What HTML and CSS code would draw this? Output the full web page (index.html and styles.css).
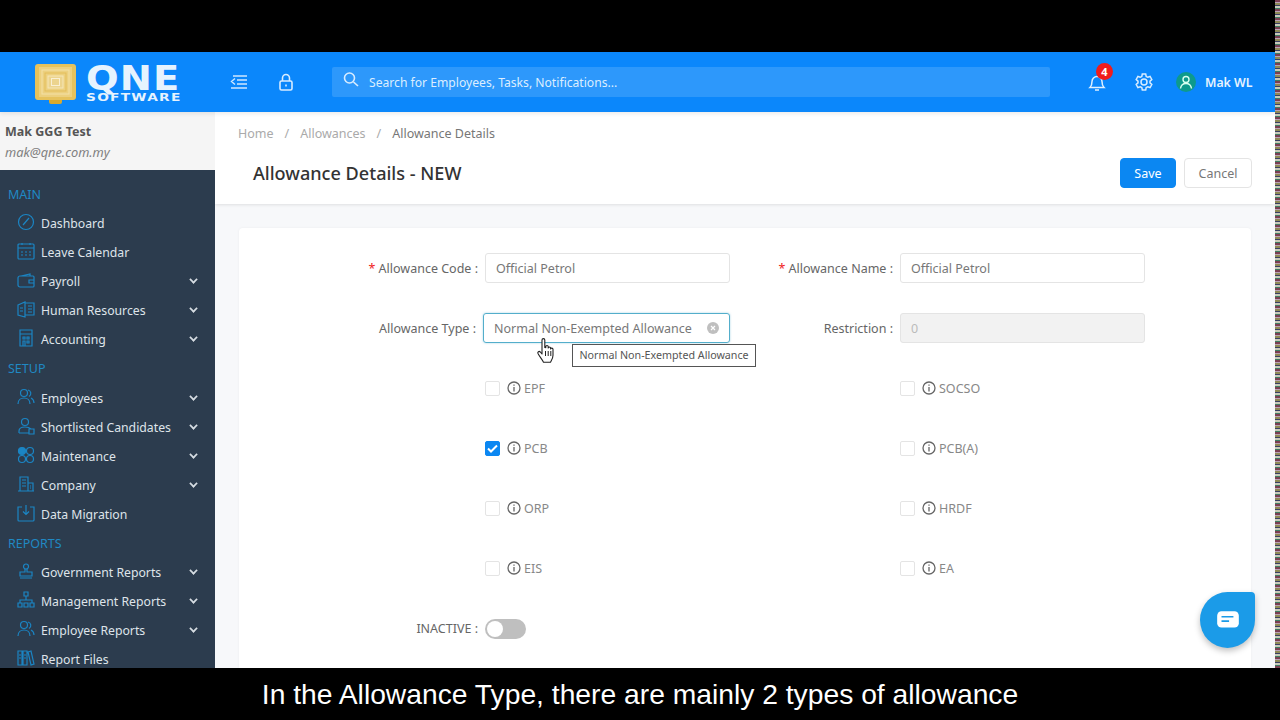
FILE: index.html
```html
<!DOCTYPE html>
<html lang="en">
<head>
<meta charset="utf-8">
<title>Allowance Details</title>
<link rel="stylesheet" href="styles.css">
</head>
<body>
<div class="screen">
<div class="left-col">
<div class="letterbox-top"></div>
  <div class="app">
    <header class="topbar">
      <div class="logo">
        <svg class="logo-mark" width="41" height="40" viewBox="0 0 41 40" fill="none">
          <path d="M14 35h13v3a2 2 0 0 1-2 2H16a2 2 0 0 1-2-2z" fill="#d9a92e"/>
          <rect x="0" y="0" width="41" height="36" rx="3" fill="#e6c25c"/>
          <rect x="4" y="3" width="33" height="30" fill="#ecd07f"/>
          <rect x="7" y="6" width="27" height="24" stroke="#f3e0a6"/>
          <rect x="10" y="9" width="21" height="18" stroke="#e3bd5a"/>
          <rect x="13" y="12" width="15" height="12" fill="#ecd48e" stroke="#f5e6b8"/>
          <rect x="16.500" y="14.500" width="8" height="7" stroke="#f9efd2"/>
        </svg>
        <div class="logo-text">
          <span class="logo-qne">QNE</span>
          <span class="logo-soft">SOFTWARE</span>
        </div>
      </div>
      <svg class="tool-icon menu-icon" width="18" height="18" viewBox="0 0 18 18" fill="none" stroke="#cfe7ff" stroke-width="1.400"><path d="M3 3h14M7 7h10M7 11h10M1 15h16M5 5.500 1.500 8.500l3.500 3"/></svg>
      <svg class="tool-icon lock-icon" width="18" height="18" viewBox="0 0 18 18" fill="none" stroke="#d8ecff" stroke-width="1.600"><rect x="3" y="8" width="12" height="9" rx="1.500"/><path d="M5.500 8V5a3.500 3.500 0 0 1 7 0v3M9 11.500v2"/></svg>
      <div class="search">
        <svg width="18" height="18" viewBox="0 0 18 18" fill="none" stroke="#d8ecff" stroke-width="1.600"><circle cx="7.500" cy="7" r="5"/><path d="m11.500 11 4.500 4"/></svg>
        <span>Search for Employees, Tasks, Notifications...</span>
      </div>
      <div class="top-right">
        <div class="bell">
          <svg width="18" height="20" viewBox="0 0 18 20" fill="none" stroke="#e0f0ff" stroke-width="1.500"><path d="M2 15.500c1.500-1.500 2-3 2-6a5 5 0 0 1 10 0c0 3 .5 4.500 2 6zM7 18h4"/></svg>
          <span class="badge">4</span>
        </div>
        <svg class="gear" width="20" height="20" viewBox="0 0 20 20" fill="none" stroke="#d8ecff" stroke-width="1.500"><path d="M8.300 2h3.400l.5 2.400 1.600.9 2.300-.8 1.700 3-1.800 1.600v1.800l1.800 1.600-1.700 3-2.300-.8-1.600.9-.5 2.400H8.300l-.5-2.400-1.600-.9-2.300.8-1.700-3 1.800-1.600V9.100L2.200 7.500l1.700-3 2.300.8 1.600-.9z"/><circle cx="10" cy="10" r="3"/></svg>
        <span class="avatar"><svg width="14" height="14" viewBox="0 0 14 14" fill="none" stroke="#d8fff0" stroke-width="1.400"><circle cx="7" cy="4.500" r="3"/><path d="M1.500 13.500c.5-3.500 2.500-5 5.500-5s5 1.500 5.500 5"/></svg></span>
        <span class="user-name">Mak WL</span>
      </div>
    </header>

    <div class="body-row">
      <aside class="sidebar">
        <div class="profile">
          <div class="profile-name">Mak GGG Test</div>
          <div class="profile-mail">mak@qne.com.my</div>
        </div>
        <nav class="nav">
          <div class="nav-head">MAIN</div>
          <a class="nav-item"><svg class="ni" viewBox="0 0 18 18"><circle cx="9" cy="9" r="7.500"/><path d="m6 12 6-7"/></svg><span>Dashboard</span></a>
          <a class="nav-item"><svg class="ni" viewBox="0 0 18 18"><rect x="1" y="2" width="16" height="15" rx="1"/><path d="M1 6h16M5 1v2M13 1v2M4 10h2M8 10h2M12 10h2M4 13h2M8 13h2M12 13h2"/></svg><span>Leave Calendar</span></a>
          <a class="nav-item"><svg class="ni" viewBox="0 0 18 18"><path d="M3 5h13a1 1 0 0 1 1 1v9a1 1 0 0 1-1 1H3a2 2 0 0 1-2-2V7a2 2 0 0 1 2-2zM4 5l9-2v2M12 9h5v3h-5z"/></svg><span>Payroll</span><i class="chev"></i></a>
          <a class="nav-item"><svg class="ni" viewBox="0 0 18 18"><path d="M1 5l7-3v15l-7-2zM8 3h9v12H8M11 6h4M11 9h4M11 12h4M3 8h3M3 11h3"/></svg><span>Human Resources</span><i class="chev"></i></a>
          <a class="nav-item"><svg class="ni" viewBox="0 0 18 18"><path d="M3 1h12v16H3zM3 5h12M6 8h2v2H6zM10 8h2v2h-2zM6 12h2v5H6zM10 12h2v2h-2z"/></svg><span>Accounting</span><i class="chev"></i></a>
          <div class="nav-head">SETUP</div>
          <a class="nav-item"><svg class="ni" viewBox="0 0 18 18"><circle cx="7" cy="5" r="3.500"/><path d="M1 16c0-4 3-6 6-6s6 2 6 6M11 2a3.500 3.500 0 0 1 1 6.500M14 10c2 1 3 3 3 5"/></svg><span>Employees</span><i class="chev"></i></a>
          <a class="nav-item"><svg class="ni" viewBox="0 0 18 18"><circle cx="8" cy="5" r="3.500"/><path d="M2 16v-2c0-2.500 2.500-4 6-4s5 1 6 2M2 16h10M12 12h5v5h-5z"/></svg><span>Shortlisted Candidates</span><i class="chev"></i></a>
          <a class="nav-item"><svg class="ni" viewBox="0 0 18 18"><circle cx="5" cy="5" r="3.500" fill="#1b85c4"/><circle cx="13" cy="5" r="3.500"/><circle cx="5" cy="13" r="3.500"/><circle cx="13" cy="13" r="3.500"/></svg><span>Maintenance</span><i class="chev"></i></a>
          <a class="nav-item"><svg class="ni" viewBox="0 0 18 18"><path d="M3 2h8v14H3zM11 8h5v8h-5zM5 5h4M5 8h4M5 11h4M13 11h1M13 13h1M1 16h16"/></svg><span>Company</span><i class="chev"></i></a>
          <a class="nav-item"><svg class="ni" viewBox="0 0 18 18"><path d="M5 3H1v13a1 1 0 0 0 1 1h14a1 1 0 0 0 1-1V3h-4M9 1v9M6 7.500 9 10.500l3-3"/></svg><span>Data Migration</span></a>
          <div class="nav-head">REPORTS</div>
          <a class="nav-item"><svg class="ni" viewBox="0 0 18 18"><circle cx="9" cy="4.500" r="2.500"/><path d="M8 7v3H3v4h12v-4h-5V7M3 16h12"/></svg><span>Government Reports</span><i class="chev"></i></a>
          <a class="nav-item"><svg class="ni" viewBox="0 0 18 18"><path d="M7 1h4v4H7zM9 5v4M3 12V9h12v3M1 12h4v4H1zM7 12h4v4H7zM13 12h4v4h-4z"/></svg><span>Management Reports</span><i class="chev"></i></a>
          <a class="nav-item"><svg class="ni" viewBox="0 0 18 18"><circle cx="7" cy="5" r="3.500"/><path d="M1 16c0-4 3-6 6-6s6 2 6 6M11 2a3.500 3.500 0 0 1 1 6.500M14 10c2 1 3 3 3 5"/></svg><span>Employee Reports</span><i class="chev"></i></a>
          <a class="nav-item"><svg class="ni" viewBox="0 0 18 18"><path d="M1 2h4v14H1zM6 2h4v14H6zM11 3l3-1 3 13-3 1zM2 6h2M7 6h2M2 9h2M7 9h2"/></svg><span>Report Files</span></a>
        </nav>
      </aside>

      <main class="main">
        <section class="page-head">
          <div class="crumbs">
            <span>Home</span><span class="sep">/</span><span>Allowances</span><span class="sep">/</span><span class="current">Allowance Details</span>
          </div>
          <div class="title-row">
            <h1>Allowance Details - NEW</h1>
            <div class="actions">
              <button class="btn btn-primary">Save</button>
              <button class="btn">Cancel</button>
            </div>
          </div>
        </section>
        <section class="card">
          <div class="form">
            <label class="lbl"><b>*</b> Allowance Code :</label>
            <div class="input">Official Petrol</div>
            <label class="lbl"><b>*</b> Allowance Name :</label>
            <div class="input">Official Petrol</div>

            <label class="lbl lbl-type">Allowance Type :</label>
            <div class="input input-focus"><span>Normal Non-Exempted Allowance</span><svg width="12" height="12" viewBox="0 0 12 12"><circle cx="6" cy="6" r="6" fill="#bfbfbf"/><path d="m4 4 4 4M8 4l-4 4" stroke="#fff" stroke-width="1.200"/></svg></div>
            <label class="lbl">Restriction :</label>
            <div class="input input-off">0</div>

            <span></span>
            <div class="check"><i class="box"></i><svg class="info" viewBox="0 0 14 14"><circle cx="7" cy="7" r="6"/><path d="M7 6v4.500M7 3.500v1.200"/></svg>EPF</div>
            <span></span>
            <div class="check"><i class="box"></i><svg class="info" viewBox="0 0 14 14"><circle cx="7" cy="7" r="6"/><path d="M7 6v4.500M7 3.500v1.200"/></svg>SOCSO</div>

            <span></span>
            <div class="check"><i class="box box-on"><svg width="11" height="9" viewBox="0 0 11 9" fill="none" stroke="#fff" stroke-width="2"><path d="m1 4.500 3 3 6-6"/></svg></i><svg class="info" viewBox="0 0 14 14"><circle cx="7" cy="7" r="6"/><path d="M7 6v4.500M7 3.500v1.200"/></svg>PCB</div>
            <span></span>
            <div class="check"><i class="box"></i><svg class="info" viewBox="0 0 14 14"><circle cx="7" cy="7" r="6"/><path d="M7 6v4.500M7 3.500v1.200"/></svg>PCB(A)</div>

            <span></span>
            <div class="check"><i class="box"></i><svg class="info" viewBox="0 0 14 14"><circle cx="7" cy="7" r="6"/><path d="M7 6v4.500M7 3.500v1.200"/></svg>ORP</div>
            <span></span>
            <div class="check"><i class="box"></i><svg class="info" viewBox="0 0 14 14"><circle cx="7" cy="7" r="6"/><path d="M7 6v4.500M7 3.500v1.200"/></svg>HRDF</div>

            <span></span>
            <div class="check"><i class="box"></i><svg class="info" viewBox="0 0 14 14"><circle cx="7" cy="7" r="6"/><path d="M7 6v4.500M7 3.500v1.200"/></svg>EIS</div>
            <span></span>
            <div class="check"><i class="box"></i><svg class="info" viewBox="0 0 14 14"><circle cx="7" cy="7" r="6"/><path d="M7 6v4.500M7 3.500v1.200"/></svg>EA</div>

            <label class="lbl">INACTIVE :</label>
            <div class="switch-cell"><span class="switch"><i></i></span></div>
          </div>
        </section>
      </main>
    </div>

    <div class="tooltip">Normal Non-Exempted Allowance</div>
    <svg class="hand" width="20" height="26" viewBox="0 0 20 26"><path d="M6 2a1.400 1.400 0 0 1 2.800 0v7.500l1 .1V8.500c0-1.400 2.400-1.400 2.400 0v1.500c0-1.300 2.400-1.300 2.400 0v1c0-1.200 2.400-1.200 2.400.2v6c0 3-1.500 5-2.500 7H7.500C6 21 3.500 18.500 2 15.500c-.7-1.500 1-2.800 2.300-1.500L6 16z" fill="#fff" stroke="#222" stroke-width="1.100" stroke-linejoin="round"/><path d="M9.500 13v5M12.200 13v5M14.800 13v5" stroke="#222" fill="none"/></svg>
    <div class="chat"><svg width="26" height="22" viewBox="0 0 24 20"><path d="M6 2h12a4 4 0 0 1 4 4v7a4 4 0 0 1-4 4H6a4 4 0 0 1-4-4V6a4 4 0 0 1 4-4z" fill="#fff"/><path d="M6 7h11M6 11h7" stroke="#1b9be8" stroke-width="1.600"/></svg></div>
  </div>
</div>
<div class="noise"></div>
</div>
<footer class="caption">In the Allowance Type, there are mainly 2 types of allowance</footer>
</body>
</html>
```
FILE: styles.css
```css
* { box-sizing: border-box; }
html, body { margin: 0; height: 100%; }
body {
  width: 1280px;
  height: 720px;
  overflow: hidden;
  background: #000;
  display: flex;
  flex-direction: column;
  font-family: "Noto Sans", "Open Sans", sans-serif;
  font-size: 13px;
  color: #666;
}
.screen { height: 668px; flex: none; display: flex; }
.left-col { width: 1275px; flex: none; display: flex; flex-direction: column; }
.letterbox-top { height: 52px; flex: none; background: #000; }
.app { position: relative; width: 1275px; height: 616px; flex: none; overflow: hidden; display: flex; flex-direction: column; background: #f7f8fa; }
.noise {
  width: 5px;
  background:
    repeating-linear-gradient(0deg, #7a3f52 0 2px, #3f7f63 2px 3px, #c9c9b8 3px 5px, #3a3f66 5px 6px, #8e8a55 6px 8px, #b9a0b5 8px 9px),
    #888;
}
.caption {
  flex: 1;
  display: flex;
  align-items: center;
  justify-content: center;
  color: #fff;
  font-family: "Liberation Sans", Arial, sans-serif;
  font-size: 28.250px;
}

.topbar {
  height: 60px;
  flex: none;
  display: flex;
  align-items: center;
  background: #0b87fb;
  position: relative;
  z-index: 3;
  box-shadow: 0 2px 4px rgba(0, 0, 0, .08);
}
.logo { width: 230px; flex: none; display: flex; align-items: center; padding-left: 35px; gap: 10px; }
.logo-mark { flex: none; margin-top: 3px; }
.logo-text { display: flex; flex-direction: column; color: #e6f3fe; font-family: "DejaVu Sans", sans-serif; font-weight: 700; line-height: 1; margin-top: 3px; }
.logo-qne { display: block; font-size: 34px; height: 28px; line-height: 27px; letter-spacing: 1px; transform: scaleX(1.130); transform-origin: left; }
.logo-soft { display: block; font-size: 11px; height: 10px; line-height: 10px; letter-spacing: 1px; transform: scaleX(1.250); transform-origin: left; }
.tool-icon { flex: none; }
.lock-icon { margin-left: 29px; }
.search {
  margin-left: 37px;
  width: 718px;
  height: 30px;
  flex: none;
  display: flex;
  align-items: center;
  gap: 9px;
  padding: 0 0 0 10px;
  background: #2d98fb;
  border-radius: 2px;
  color: #dceeff;
  font-size: 12.150px;
}
.search span { margin-top: 1px; }
.search svg { margin-top: -5px; }
.top-right { display: flex; align-items: center; margin-left: 38px; }
.bell { position: relative; width: 18px; height: 20px; }
.badge {
  position: absolute;
  left: 8px;
  top: -9px;
  width: 17px;
  height: 17px;
  border-radius: 50%;
  background: #f01c1c;
  color: #fff;
  font-size: 11px;
  font-weight: 700;
  line-height: 17px;
  text-align: center;
}
.gear { margin-left: 28px; flex: none; }
.avatar { width: 20px; height: 20px; margin-left: 22px; border-radius: 50%; background: #0d9a8c; display: flex; align-items: center; justify-content: center; }
.user-name { margin-left: 9px; color: #e6f3fe; font-weight: 600; font-size: 12.300px; white-space: nowrap; }

.body-row { flex: 1; min-height: 0; display: flex; }
.sidebar { width: 215px; flex: none; display: flex; flex-direction: column; overflow: hidden; background: #2c3c4e; }
.profile { height: 58px; flex: none; background: #f5f5f5; padding: 11px 5px 0; }
.profile-name { font-weight: 700; font-size: 12.500px; color: #555; line-height: 18px; }
.profile-mail { font-style: italic; font-size: 12.800px; color: #808080; line-height: 18px; margin-top: 2px; }
.nav { padding-top: 10px; }
.nav-head { height: 29.080px; line-height: 29px; padding-left: 8px; color: #2089c4; font-size: 12.500px; }
.nav-item { height: 29.080px; display: flex; align-items: center; padding-left: 17px; color: #dfe4ea; font-size: 12.250px; position: relative; white-space: nowrap; }
.ni { width: 18px; height: 18px; margin-right: 6px; flex: none; fill: none; stroke: #1b85c4; stroke-width: 1.200; margin-top: -3px; }
.chev { position: absolute; left: 190px; top: 9px; width: 7px; height: 7px; border-right: 2px solid #d6dce2; border-bottom: 2px solid #d6dce2; transform: rotate(45deg) scale(.85); }

.main { flex: 1; min-width: 0; overflow: hidden; display: flex; flex-direction: column; }
.page-head { height: 92px; flex: none; background: #fff; box-shadow: 0 1px 3px rgba(0, 0, 0, .1); padding: 12px 23px 0 23px; }
.crumbs { display: flex; align-items: center; gap: 11px; height: 19px; color: #aaa; font-size: 12.500px; }
.crumbs .current { color: #777; }
.title-row { display: flex; align-items: center; justify-content: space-between; margin-top: 14px; padding-left: 15px; height: 32px; }
h1 { margin: 0; font-size: 18.100px; font-weight: 500; color: #333; }
.actions { display: flex; gap: 8px; }
.btn { height: 30px; width: 68px; padding: 0; border: 1px solid #e4e4e4; border-radius: 4px; background: #fff; color: #777; font: inherit; font-size: 12.500px; }
.btn-primary { width: 56px; background: #0b87f2; border-color: #0b87f2; color: #fff; }

.card { margin: 24px 24px 0; background: #fff; flex: 1; border-radius: 4px 4px 0 0; box-shadow: 0 0 3px rgba(0, 0, 0, .05); padding-top: 10px; }
.form { display: grid; grid-template-columns: 246px 245px 170px 245px; grid-auto-rows: 60px; align-items: center; }
.lbl { text-align: right; padding-right: 7px; color: #666; font-size: 12.500px; white-space: nowrap; }
.lbl-type { padding-right: 9px; }
.lbl b { color: #f01c1c; font-weight: 400; }
.input { height: 30px; border: 1px solid #e4e4e4; border-radius: 3px; padding: 0 10px; display: flex; align-items: center; color: #777; font-size: 12.500px; }
.input-focus { justify-content: space-between; border-color: #53aecb; box-shadow: 0 0 2px rgba(60, 160, 200, .5); padding: 0 10px; margin-left: -2px; }
.input-off { background: #f2f2f2; color: #bbb; }
.check { display: flex; align-items: center; color: #888; font-size: 12.500px; }
.box { width: 15px; height: 15px; border: 1px solid #e4e4e4; border-radius: 2px; margin-right: 7px; display: flex; align-items: center; justify-content: center; flex: none; }
.box-on { background: #0b87f2; border-color: #0b87f2; }
.info { width: 14px; height: 14px; margin-right: 3px; fill: none; stroke: #666; stroke-width: 1.300; flex: none; }
.switch-cell { display: flex; padding-top: 2px; }
.switch { width: 41px; height: 20px; border-radius: 10px; background: #bfbfbf; padding: 2px; display: block; }
.switch i { display: block; width: 16px; height: 16px; border-radius: 50%; background: #fff; }

.tooltip { position: absolute; left: 572px; top: 292px; width: 184px; height: 23px; border: 1px solid #555; background: #fff; color: #555; font-size: 10.700px; line-height: 21px; text-align: center; white-space: nowrap; z-index: 4; }
.hand { position: absolute; left: 536px; top: 286px; z-index: 5; }
.chat { position: absolute; left: 1200px; top: 540px; width: 55px; height: 56px; background: #1b9be8; border-radius: 50% 4px 50% 50%; display: flex; align-items: center; justify-content: center; box-shadow: 0 3px 6px rgba(0, 0, 0, .25); z-index: 4; }
```
